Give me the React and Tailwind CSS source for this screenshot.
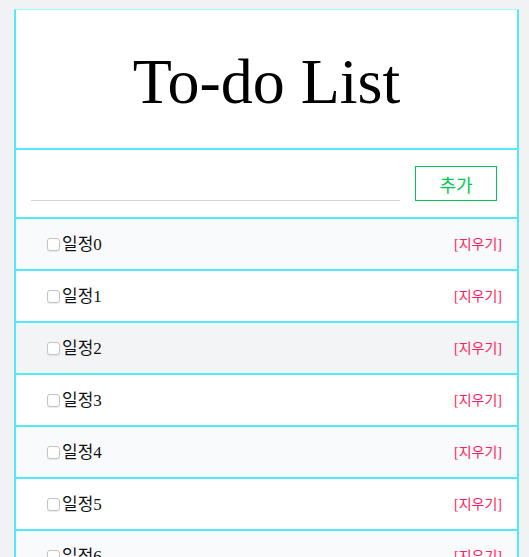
import { useState } from 'react';

const serifCls = "font-[family-name:'Liberation_Serif','Noto_Sans_CJK_KR',serif]";
const koCls = "font-[family-name:'Noto_Sans_CJK_KR',sans-serif]";

function Label({ text }) {
    const m = text.match(/^(\D*)(\d*)$/);
    const word = m ? m[1] : text;
    const num = m ? m[2] : '';
    return (
        <span>
            <span className={koCls}>{word}</span>
            <span className={serifCls}>{num}</span>
        </span>
    );
}

export default function App() {
    const [items, setItems] = useState(Array.from({ length: 8 }, (_, i) => ({ id: i, text: `일정${i}`, done: false })));
    const [value, setValue] = useState('');

    const add = () => {
        if (!value.trim()) return;
        setItems([...items, { id: Date.now(), text: value, done: false }]);
        setValue('');
    };

    return (
        <div className={`min-h-screen bg-[#f1f2f4] pt-[9px] pl-[14px] pr-[10px] ${serifCls}`}>
            <div className="border-2 border-t border-cyan-300 border-t-cyan-200 bg-white">
                <header className="h-[140px] flex items-center justify-center border-b-2 border-cyan-300">
                    <h1 className="text-[64px] leading-none text-black pt-[6px]">To-do List</h1>
                </header>

                <div className="h-[69px] flex items-center gap-[15px] pl-[15px] pr-[20px] border-b-2 border-cyan-300">
                    <input
                        value={value}
                        onChange={(e) => setValue(e.target.value)}
                        className="flex-1 h-[34px] mt-[1px] border-b border-gray-300 outline-none text-base px-1"
                    />
                    <button
                        onClick={add}
                        className={`w-[82px] h-[35px] border border-green-500 text-green-500 text-[18px] leading-none ${koCls}`}
                    >
                        추가
                    </button>
                </div>

                <ul>
                    {items.map((item, i) => (
                        <li
                            key={item.id}
                            className={`h-[52px] flex items-center justify-between pl-[27px] pr-[15px] border-b-2 border-cyan-300 ${i === 2 ? 'bg-[#f3f4f6]' : i % 2 === 0 ? 'bg-[#f9fafb]' : 'bg-white'}`}
                        >
                            <label className="flex items-center text-[17px] text-[#111]">
                                <input
                                    type="checkbox"
                                    checked={item.done}
                                    onChange={() => setItems(items.map((x) => (x.id === item.id ? { ...x, done: !x.done } : x)))}
                                    className="appearance-none w-[13px] h-[13px] ml-[4px] mr-[2px] mt-[1px] border border-[#c4c4c4] rounded-[3px] bg-white shadow-[0_1px_1px_rgba(0,0,0,0.08)] checked:bg-blue-500 checked:border-blue-500"
                                />
                                <span className={item.done ? 'line-through text-gray-400' : ''}>
                                    <Label text={item.text} />
                                </span>
                            </label>
                            <button
                                onClick={() => setItems(items.filter((x) => x.id !== item.id))}
                                className="text-[14px] text-rose-500"
                            >
                                <span className={serifCls}>[</span>
                                <span className={koCls}>지우기</span>
                                <span className={serifCls}>]</span>
                            </button>
                        </li>
                    ))}
                </ul>
            </div>
        </div>
    );
}
